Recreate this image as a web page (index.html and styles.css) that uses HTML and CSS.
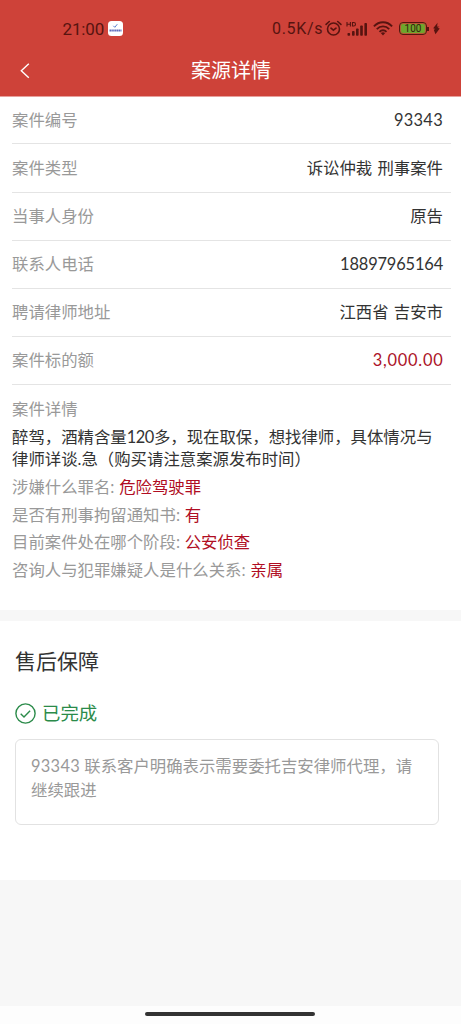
FILE: index.html
```html
<!DOCTYPE html>
<html lang="zh-CN">
<head>
<meta charset="utf-8">
<meta name="viewport" content="width=device-width, initial-scale=1">
<title>案源详情</title>
<link rel="stylesheet" href="styles.css">
</head>
<body>
<div class="screen">
  <header class="header">
    <div class="status">
      <div class="status-left">
        <span class="clock">21:00</span>
        <svg class="app-icon" width="15" height="15" viewBox="0 0 15 15"><rect width="15" height="15" rx="3.5" fill="#fff"/><path d="M5.3 4.8 6.8 6.3 9.3 3.2" fill="none" stroke="#5c7fce" stroke-width="1"/><path d="M1.5 9.4h12" stroke="#5e6cbc" stroke-width="2" stroke-dasharray="1.5 .35"/></svg>
      </div>
      <div class="status-right">
        <span class="speed">0.5K/s</span>
        <svg class="alarm" width="17" height="17" viewBox="0 0 17 17" fill="none" stroke="#571410" stroke-width="1.6" stroke-linecap="round"><circle cx="8.5" cy="9" r="6"/><path d="M1.1 4.4 4.3 1.5M15.9 4.4 12.7 1.5M6 8.2l2.4 2 2.6-2"/></svg>
        <svg class="signal" width="22" height="16" viewBox="0 0 22 16"><path d="M1 1v4.5M4.4 1v4.5M1 3.2h3.4M6.5 1.5v3.5h1.2c2.4 0 2.4-3.5 0-3.5z" fill="none" stroke="#571410" stroke-width="1.1"/><g fill="#571410"><rect x="1.5" y="12" width="2.6" height="2.8" rx=".8"/><rect x="6" y="10" width="2.6" height="4.8" rx=".8"/><rect x="10" y="7.5" width="2.6" height="7.3" rx=".8"/><rect x="14.2" y="4.5" width="2.6" height="10.3" rx=".8"/><rect x="18.4" y="2" width="2.6" height="12.8" rx=".8"/></g></svg>
        <svg class="wifi" width="20" height="15" viewBox="0 0 20 15" fill="none" stroke="#571410" stroke-width="1.9"><path d="M.9 5.3C6-.2 14-.2 19.1 5.3M3.8 8.1c3.5-3.7 8.9-3.7 12.4 0M6.5 10.8c2-2 5-2 7 0"/><path d="M7.8 12.1 10 14.5l2.2-2.4q-2.2-1.8-4.4 0z" fill="#571410" stroke="none"/></svg>
        <span class="battery">100</span><i class="battery-tip"></i>
        <svg class="bolt" width="8" height="13" viewBox="0 0 8 13"><path d="M5.2 0 .2 6.1l2.5.9-1.8.9L2.8 13 7.7 6.4 5.1 5.7l2.4-1.1-2.8-.5z" fill="#571410"/></svg>
      </div>
    </div>
    <nav class="navbar">
      <svg class="back" width="10" height="16" viewBox="0 0 10 16"><path d="M8.8.8 1.3 7.8l7.5 7" fill="none" stroke="#fff" stroke-width="1.4"/></svg>
      <h1 class="nav-title">案源详情</h1>
    </nav>
  </header>

  <main>
    <section class="case">
      <div class="row row-first"><span class="label">案件编号</span><span class="value num">93343</span></div>
      <div class="row row-tall"><span class="label">案件类型</span><span class="value">诉讼仲裁 刑事案件</span></div>
      <div class="row"><span class="label">当事人身份</span><span class="value">原告</span></div>
      <div class="row"><span class="label">联系人电话</span><span class="value phone">18897965164</span></div>
      <div class="row"><span class="label">聘请律师地址</span><span class="value">江西省 吉安市</span></div>
      <div class="row"><span class="label">案件标的额</span><span class="value amount">3,000.00</span></div>
      <div class="detail">
        <div class="label detail-title">案件详情</div>
        <p class="desc">醉驾，酒精含量<span class="count">120</span>多，现在取保，想找律师，具体情况与<br>律师详谈.急（购买请注意案源发布时间）</p>
        <div class="qa">涉嫌什么罪名: <b>危险驾驶罪</b></div>
        <div class="qa">是否有刑事拘留通知书: <b>有</b></div>
        <div class="qa">目前案件处在哪个阶段: <b>公安侦查</b></div>
        <div class="qa">咨询人与犯罪嫌疑人是什么关系: <b>亲属</b></div>
      </div>
    </section>

    <section class="service">
      <h2 class="service-title">售后保障</h2>
      <div class="done">
        <svg width="21" height="21" viewBox="0 0 21 21" fill="none" stroke="#2b8b4a" stroke-width="1.4"><circle cx="10.5" cy="10.5" r="9.6"/><path d="m5.7 10.7 3.3 3.2 6.1-6.2"/></svg>
        <span class="done-text">已完成</span>
      </div>
      <div class="note"><span class="num">93343</span> 联系客户明确表示需要委托吉安律师代理，请<br>继续跟进</div>
    </section>
  </main>
  <footer class="home"><i class="home-bar"></i></footer>
</div>
</body>
</html>
```
FILE: styles.css
```css
* { box-sizing: border-box; }
body {
  margin: 0;
  background: #f7f7f7;
  font-family: Lato, "Noto Sans CJK SC", sans-serif;
  font-size: 16.4px;
  color: #333;
}
.screen { width: 461px; height: 1024px; display: flex; flex-direction: column; overflow: hidden; }
main { flex: 1; }

.header { height: 97px; background: #ce4239; border-bottom: 1px solid #e7a09c; }
.status {
  height: 46px;
  padding: 11px 21px 0 62.5px;
  display: flex;
  align-items: center;
  justify-content: space-between;
  color: #571410;
}
.status-left, .status-right { display: flex; align-items: center; height: 34px; }
.clock { font: 17px/34px Roboto, sans-serif; letter-spacing: -.15px; width: 45px; }
.speed { font: 16px/34px Roboto, sans-serif; letter-spacing: .7px; width: 53px; white-space: nowrap; }
.signal { margin-left: 4px; }
.wifi { margin-left: 5px; }
.battery {
  width: 28px;
  height: 13px;
  margin-left: 6px;
  border: 1.5px solid #571410;
  border-radius: 4px;
  background: #70a52c;
  box-shadow: inset 0 0 0 1px #b75734;
  font: 10px/11px Roboto, sans-serif;
  text-align: center;
  color: #34200c;
}
.battery-tip { width: 2px; height: 4px; background: #571410; margin-right: 4px; }
.bolt { width: 7px; }

.navbar { display: flex; align-items: center; height: 50px; padding: 0 20px; }
.nav-title {
  flex: 1;
  margin: -2px 9px 0 0;
  text-align: center;
  font-size: 20px;
  line-height: 28px;
  font-weight: 400;
  color: #fff;
}

.case { height: 513px; padding: 0 10px 0 12px; background: #fff; }
.row {
  height: 48px;
  padding-right: 8px;
  display: flex;
  justify-content: space-between;
  border-bottom: 1px solid #e4e4e4;
  line-height: 46px;
}
.row-first { height: 47px; line-height: 45px; }
.row-tall { height: 49px; line-height: 47px; }
.label { color: #999; }
.value { word-spacing: 1px; }
.num { letter-spacing: .3px; }
.phone { letter-spacing: -.15px; }
.amount { color: #ac1328; letter-spacing: .75px; margin-right: -.5px; }
.detail { padding-top: 12px; white-space: nowrap; }
.detail-title { line-height: 24px; }
.desc { margin: 5px 0 3px; line-height: 22px; }
.count { letter-spacing: -.45px; }
.qa { height: 27.6px; line-height: 28px; color: #999; word-spacing: .5px; }
.qa b { font-weight: 400; color: #b00d23; }

.service { height: 270px; border-top: 11px solid #f7f7f7; padding: 26px 22px 0 15px; background: #fff; }
.service-title { margin: 0; font-size: 21px; line-height: 28px; font-weight: 400; }
.done { display: flex; align-items: center; gap: 6px; height: 28px; margin-top: 24px; font-size: 18.4px; color: #2b8b4a; }
.done-text { padding-bottom: 2px; }
.note {
  height: 86px;
  margin-top: 12px;
  padding: 14px 15px;
  border: 1px solid #e2e2e2;
  border-radius: 6px;
  line-height: 23.5px;
  color: #999;
  white-space: nowrap;
}

.home { height: 18px; background: #fdfdfd; padding-top: 6px; }
.home-bar { display: block; width: 170px; height: 4px; margin-left: 145px; border-radius: 2px; background: #333; }
```
